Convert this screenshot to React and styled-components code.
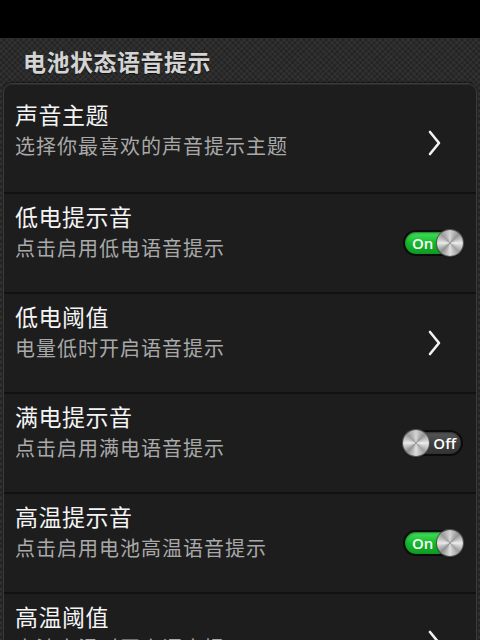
import React from "react";
import styled, { createGlobalStyle } from "styled-components";

const Global = createGlobalStyle`
  html, body { margin: 0; padding: 0; background: #000; }
  body { font-family: "Noto Sans CJK SC", "Noto Sans", sans-serif; }
`;

const Page = styled.div`
  width: 480px;
  height: 640px;
  overflow: hidden;
  display: flex;
  flex-direction: column;
  background-color: #2b2b2b;
  background-image:
    repeating-linear-gradient(45deg, rgba(255,255,255,0.035) 0 2px, transparent 2px 4px),
    repeating-linear-gradient(-45deg, rgba(0,0,0,0.18) 0 2px, transparent 2px 4px);
`;

const StatusBar = styled.div`
  height: 38px;
  flex: none;
  background: #000;
`;

const Header = styled.div`
  height: 45px;
  flex: none;
  display: flex;
  align-items: center;
  padding-left: 23px;
  color: #d4d4d4;
  font-size: 23px;
  font-weight: 700;
  letter-spacing: 0.5px;
  text-shadow: 0 1px 1px rgba(0,0,0,0.6);
`;

const Card = styled.div`
  margin: 0 3px;
  flex: 1;
  background: #1d1d1d;
  border: 1px solid #3a3a3a;
  border-bottom: none;
  border-radius: 9px 9px 0 0;
  box-shadow: inset 0 1px 0 #2c2c2c, 0 -1px 2px rgba(0,0,0,0.5);
  padding-top: 9px;
  display: flex;
  flex-direction: column;
`;

const Row = styled.div`
  height: 98px;
  flex: none;
  display: flex;
  align-items: center;
  padding: 0 13px 0 11px;
  border-bottom: 2px solid #111;
  &:first-child { height: 99px; }
`;

const Texts = styled.div`
  flex: 1;
  display: flex;
  flex-direction: column;
  gap: 3px;
  margin-top: ${p => (p.$first ? "-26px" : "-23px")};
`;

const Title = styled.div`
  color: #f4f4f4;
  font-size: 23px;
  line-height: 29px;
  letter-spacing: 0.5px;
`;

const Sub = styled.div`
  color: #a9a9a9;
  font-size: 20px;
  line-height: 28px;
  letter-spacing: 1px;
`;

const Chevron = styled.svg`
  width: 16px;
  height: 26px;
  margin-right: 21px;
  flex: none;
`;

const Toggle = styled.div`
  position: relative;
  width: 60px;
  height: 26px;
  box-sizing: border-box;
  flex: none;
  border-radius: 13px;
  border: 2px solid #0b0b0b;
  background: ${p =>
    p.$on
      ? "linear-gradient(#45e25c, #16b82e 50%, #0e9a22)"
      : "linear-gradient(#5a5a5a, #3e3e3e 50%, #333)"};
  box-shadow: inset 0 1px 2px rgba(0,0,0,0.5);
  display: flex;
  align-items: center;
  justify-content: ${p => (p.$on ? "flex-start" : "flex-end")};
`;

const ToggleLabel = styled.span`
  color: #fff;
  font-family: "Open Sans", "DejaVu Sans", sans-serif;
  font-size: 15px;
  font-weight: 600;
  line-height: 1;
  ${p => (p.$on ? "margin-left: 7px;" : "margin-right: 5px;")}
`;

const Knob = styled.div`
  position: absolute;
  top: -2px;
  ${p => (p.$on ? "right: -2px;" : "left: -2px;")}
  width: 26px;
  height: 26px;
  border-radius: 50%;
  background:
    radial-gradient(circle at 50% 50%, rgba(255,255,255,0.0) 0 30%, rgba(0,0,0,0.05) 70%, rgba(0,0,0,0.25) 100%),
    conic-gradient(from 0deg, #d9d9d9, #9a9a9a 45deg, #f2f2f2 90deg, #a5a5a5 135deg, #e4e4e4 180deg, #959595 225deg, #efefef 270deg, #a0a0a0 315deg, #d9d9d9);
  box-shadow: 0 0 0 1px #555, 0 1px 2px rgba(0,0,0,0.7);
`;

const rows = [
  { t: "声音主题", s: "选择你最喜欢的声音提示主题", k: "nav" },
  { t: "低电提示音", s: "点击启用低电语音提示", k: "on" },
  { t: "低电阈值", s: "电量低时开启语音提示", k: "nav" },
  { t: "满电提示音", s: "点击启用满电语音提示", k: "off" },
  { t: "高温提示音", s: "点击启用电池高温语音提示", k: "on" },
  { t: "高温阈值", s: "电池高温时开启语音提示", k: "nav" },
];

function Arrow() {
  return (
    <Chevron viewBox="0 0 16 26">
      <path d="M4 2 L13 13 L4 24" fill="none" stroke="#f2f2f2" strokeWidth="2.6" strokeLinecap="round" strokeLinejoin="round" />
    </Chevron>
  );
}

export default function App() {
  return (
    <>
      <Global />
      <Page>
        <StatusBar />
        <Header>电池状态语音提示</Header>
        <Card>
          {rows.map((r, i) => (
            <Row key={i}>
              <Texts $first={i === 0}>
                <Title>{r.t}</Title>
                <Sub>{r.s}</Sub>
              </Texts>
              {r.k === "nav" ? (
                <Arrow />
              ) : (
                <Toggle $on={r.k === "on"}>
                  <ToggleLabel $on={r.k === "on"}>{r.k === "on" ? "On" : "Off"}</ToggleLabel>
                  <Knob $on={r.k === "on"} />
                </Toggle>
              )}
            </Row>
          ))}
        </Card>
      </Page>
    </>
  );
}
